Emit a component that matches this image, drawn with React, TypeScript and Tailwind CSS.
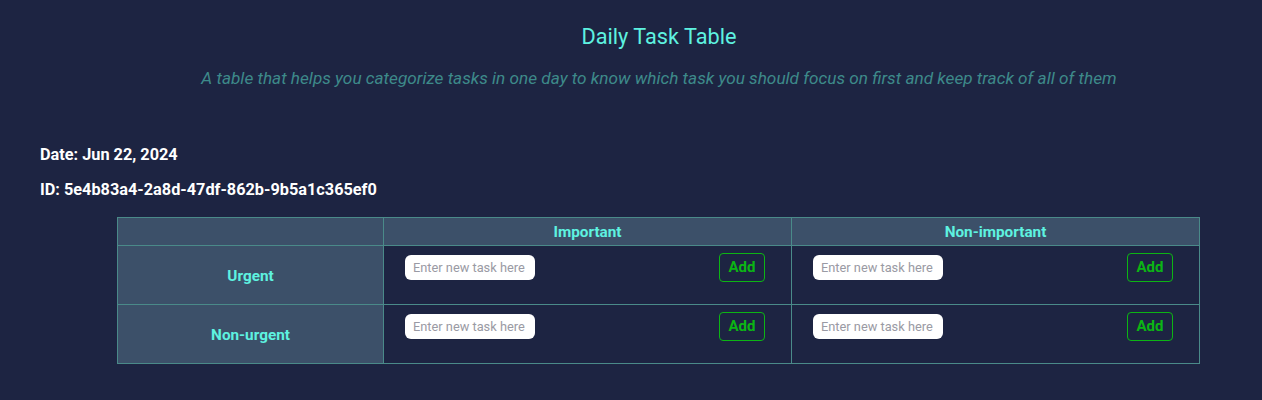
const COLS = ['Important', 'Non-important']
const ROWS = ['Urgent', 'Non-urgent']

function TaskCell() {
  return (
    <td className="border border-[#4a8a89] bg-[#1d2442] align-top h-[59px] pl-[21px] pr-[26px] pt-[7px]">
      <div className="flex items-start justify-between">
        <input
          type="text"
          placeholder="Enter new task here"
          className="mt-[2px] w-[130px] h-[25px] rounded-[6px] bg-white px-[8px] text-[12.8px] text-gray-800 placeholder:text-[#9a9aa4] outline-none"
        />
        <button className="w-[46px] h-[29px] rounded-[4px] border border-[#0cb514] text-[15px] font-bold text-[#0cb514]">
          Add
        </button>
      </div>
    </td>
  )
}

export default function App() {
  return (
    <div className="min-h-[400px] bg-[#1d2442] font-['Roboto',sans-serif] px-10 pt-[24px]">
      <div className="pl-[56px]">
        <h1 className="text-center text-[21.7px] leading-[26px] text-[#5ef2e0]">Daily Task Table</h1>
        <p className="mt-[18px] text-center text-[17.2px] italic leading-[21px] text-[#3d8a8a]">
          A table that helps you categorize tasks in one day to know which task you should focus on first and keep track of all of them
        </p>
      </div>

      <div className="mt-[56px] text-[16.3px] font-bold leading-[20px] text-white">Date: Jun 22, 2024</div>
      <div className="mt-[15px] text-[16.3px] font-bold leading-[20px] text-white">ID: 5e4b83a4-2a8d-47df-862b-9b5a1c365ef0</div>

      <table className="mt-[17px] ml-[77px] w-[1082px] border-collapse table-fixed">
        <colgroup>
          <col className="w-[266px]" />
          <col className="w-[408px]" />
          <col className="w-[408px]" />
        </colgroup>
        <thead>
          <tr className="h-[28px]">
            <th className="border border-[#4a8a89] bg-[#3c5069]" />
            {COLS.map((c) => (
              <th key={c} className="border border-[#4a8a89] bg-[#3c5069] text-[15.3px] font-bold leading-[18px] text-[#5ef2e0]">
                {c}
              </th>
            ))}
          </tr>
        </thead>
        <tbody>
          {ROWS.map((r) => (
            <tr key={r}>
              <th className="border border-[#4a8a89] bg-[#3c5069] text-[15.3px] font-bold leading-[18px] text-[#5ef2e0] pt-[2px]">
                {r}
              </th>
              {COLS.map((c) => (
                <TaskCell key={c} />
              ))}
            </tr>
          ))}
        </tbody>
      </table>
    </div>
  )
}
